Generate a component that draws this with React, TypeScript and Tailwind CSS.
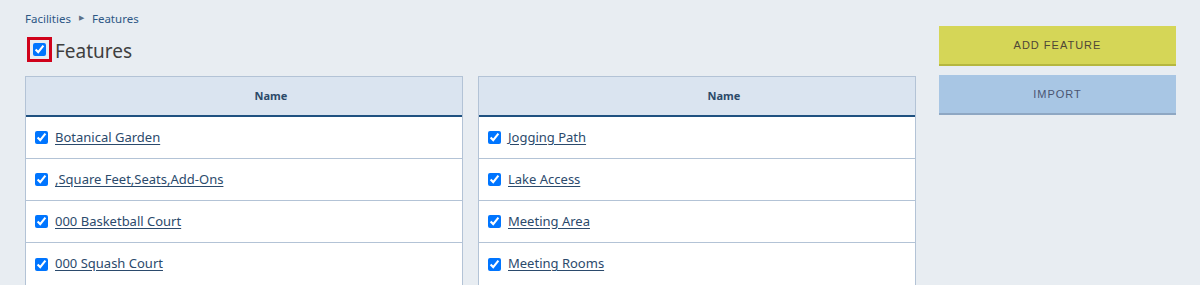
import React from "react";

const left = ["Botanical Garden", ",Square Feet,Seats,Add-Ons", "000 Basketball Court", "000 Squash Court"];
const right = ["Jogging Path", "Lake Access", "Meeting Area", "Meeting Rooms"];

function Table({ items }: { items: string[] }) {
  return (
    <div className="flex-1 border border-[#b3c3d6] bg-white">
      <div className="h-[40px] bg-[#dae4f0] border-b-2 border-[#1f5180] flex items-center justify-center pl-[54px] text-[11px] font-bold text-[#2c4a69]">
        Name
      </div>
      {items.map((t) => (
        <div key={t} className="h-[42px] border-b border-[#b3c3d6] flex items-center pl-[9px] gap-[7px] last:border-b-0">
          <input type="checkbox" defaultChecked className="w-[13px] h-[13px] m-0" />
          <a href="#" className="text-[13px] text-[#2b4a6c] underline underline-offset-2">{t}</a>
        </div>
      ))}
    </div>
  );
}

export default function App() {
  return (
    <div className="w-[1200px] h-[285px] bg-[#e8edf2] overflow-hidden flex gap-[23px] pl-[25px]" style={{ fontFamily: "'Noto Sans', 'Open Sans', sans-serif" }}>
      <div className="w-[891px] flex flex-col">
        <div className="pt-[10px] h-[27px] flex items-center gap-[8px] text-[11.5px] text-[#2d5785]">
          <span>Facilities</span>
          <span className="text-[7px] text-[#5a7089]">▶</span>
          <span>Features</span>
        </div>
        <div className="flex items-center gap-[3px] mt-[10px] ml-[2px] h-[25px]">
          <div className="w-[25px] h-[25px] border-[3px] border-[#d0021b] flex items-center justify-center">
            <input type="checkbox" defaultChecked className="w-[13px] h-[13px] m-0" />
          </div>
          <span className="text-[19px] text-[#3f3f3f] pt-[4px]">Features</span>
        </div>
        <div className="flex gap-[15px] mt-[14px]">
          <Table items={left} />
          <Table items={right} />
        </div>
      </div>
      <div className="w-[237px] flex flex-col gap-[9px] pt-[26px]">
        <button className="h-[40px] bg-[#d5d657] border-b-2 border-[#b5b73f] text-[11px] tracking-[1px] text-[#4f4636]" style={{ fontFamily: "'Liberation Sans', sans-serif" }}>
          ADD FEATURE
        </button>
        <button className="h-[40px] bg-[#a8c6e4] border-b-2 border-[#8ea7c3] text-[11px] tracking-[1px] text-[#4a5572]" style={{ fontFamily: "'Liberation Sans', sans-serif" }}>
          IMPORT
        </button>
      </div>
    </div>
  );
}
